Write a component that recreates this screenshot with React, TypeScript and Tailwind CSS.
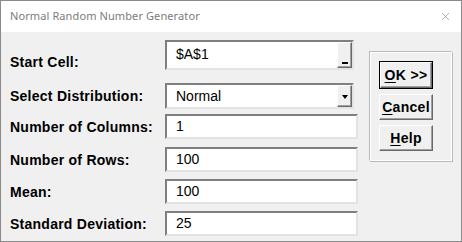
import { X } from "lucide-react";

const sunken =
  "bg-white border-2 border-t-[#7f7f7f] border-l-[#7f7f7f] border-b-[#e3e3e3] border-r-[#e3e3e3]";
const raised =
  "bg-[#f0f0f0] border border-t-white border-l-white border-b-[#6a6a6a] border-r-[#6a6a6a] shadow-[inset_-1px_-1px_0_#a0a0a0]";

const fields = [
  { label: "Number of Columns:", value: "1", mt: "mt-[5px]" },
  { label: "Number of Rows:", value: "100", mt: "mt-[8px]" },
  { label: "Mean:", value: "100", mt: "mt-[7px]" },
  { label: "Standard Deviation:", value: "25", mt: "mt-[7px]" },
];

function Label({ children }: { children: string }) {
  return (
    <div className="w-[155px] shrink-0 text-[14px] font-bold tracking-[0.25px] text-black leading-none">
      {children}
    </div>
  );
}

function DialogButton({ under, rest, isDefault }: { under: string; rest: string; isDefault?: boolean }) {
  const inner = (
    <div className={`${raised} w-full h-full flex items-center justify-center text-[14px] font-bold tracking-[0.3px] text-black`}>
      <span className="underline underline-offset-2">{under}</span>
      <span>{rest}</span>
    </div>
  );
  if (isDefault) {
    return <div className="w-[54px] h-[28px] border border-black">{inner}</div>;
  }
  return <div className="w-[54px] h-[26px]">{inner}</div>;
}

export default function App() {
  return (
    <div className="w-[462px] h-[242px] border border-[#8a8a8a] flex flex-col font-['Liberation_Sans',Arial,sans-serif] overflow-hidden">
      <div className="h-[31px] shrink-0 bg-white flex items-center justify-between pl-[9px] pr-[9px]">
        <span className="font-['Noto_Sans',sans-serif] text-[11px] tracking-[0.1px] text-[#7b7b7b]">Normal Random Number Generator</span>
        <X size={13} strokeWidth={1} className="text-[#6e6e6e]" />
      </div>

      <div className="flex-1 bg-[#f0f0f0] flex">
        <div className="pl-[9px] pt-[8px] flex flex-col">
          <div className="flex items-end h-[30px]">
            <div className="pb-[1px]">
              <Label>Start Cell:</Label>
            </div>
            <div className={`${sunken} w-[189px] h-[30px] flex`}>
              <div className="flex-1 pl-[9px] pt-[5px] text-[14px] leading-none text-black">$A$1</div>
              <div className={`${raised} w-[15px] h-full flex items-end justify-center pb-[3px]`}>
                <div className="w-[6px] h-[2px] bg-black" />
              </div>
            </div>
          </div>

          <div className="flex items-center h-[26px] mt-[13px]">
            <Label>Select Distribution:</Label>
            <div className={`${sunken} w-[189px] h-[26px] flex`}>
              <div className="flex-1 pl-[9px] flex items-center text-[14px] text-black">Normal</div>
              <div className={`${raised} w-[15px] h-full flex items-center justify-center`}>
                <div className="w-0 h-0 border-l-[3px] border-r-[3px] border-t-[4px] border-l-transparent border-r-transparent border-t-black mt-[2px]" />
              </div>
            </div>
          </div>

          {fields.map((f) => (
            <div key={f.label} className={`flex items-center h-[25px] ${f.mt}`}>
              <Label>{f.label}</Label>
              <div className={`${sunken} w-[193px] h-[25px] pl-[9px] flex items-center text-[14px] text-black`}>
                {f.value}
              </div>
            </div>
          ))}
        </div>

        <div className="ml-[11px] mt-[19px]">
          <div className="w-[83px] h-[110px] border border-t-[#b9b9b9] border-l-[#b9b9b9] border-b-white border-r-white shadow-[inset_1px_1px_0_white,1px_1px_0_#b9b9b9] pl-[9px] pt-[9px] flex flex-col gap-[5px]">
            <DialogButton under="O" rest="K >>" isDefault />
            <DialogButton under="C" rest="ancel" />
            <DialogButton under="H" rest="elp" />
          </div>
        </div>
      </div>
    </div>
  );
}
